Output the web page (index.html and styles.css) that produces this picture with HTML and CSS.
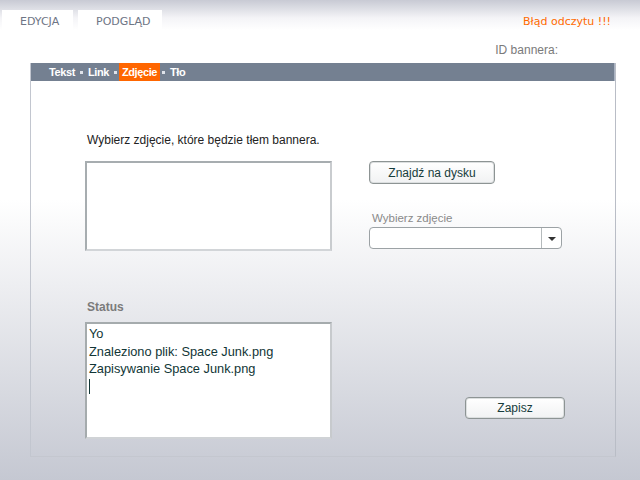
FILE: index.html
```html
<!DOCTYPE html>
<html lang="pl">
<head>
<meta charset="utf-8">
<link rel="stylesheet" href="styles.css">
</head>
<body>
<div class="page">
  <header class="top">
    <nav class="tabs">
      <div class="tab tab-edit">EDYCJA</div>
      <div class="tab tab-preview">PODGLĄD</div>
    </nav>
    <div class="error">Błąd odczytu !!!</div>
  </header>
  <div class="id-row">ID bannera:</div>
  <section class="panel">
    <div class="bar">
      <span class="crumb">Tekst</span><span class="dot"></span>
      <span class="crumb">Link</span><span class="dot"></span>
      <span class="crumb active">Zdjęcie</span><span class="dot"></span>
      <span class="crumb">Tło</span>
    </div>
    <div class="content">
      <p class="intro">Wybierz zdjęcie, które będzie tłem bannera.</p>
      <div class="row">
        <div class="preview-box"></div>
        <div class="side">
          <button class="btn btn-find">Znajdź na dysku</button>
          <label class="select-label">Wybierz zdjęcie</label>
          <div class="select">
            <div class="select-value"></div>
            <div class="select-arrow"><span class="tri"></span></div>
          </div>
        </div>
      </div>
      <div class="status-title">Status</div>
      <div class="row">
        <div class="status-box">
          <div>Yo</div>
          <div>Znaleziono plik: Space Junk.png</div>
          <div>Zapisywanie Space Junk.png</div>
          <div class="caret"></div>
        </div>
        <div class="side side-bottom">
          <button class="btn btn-save">Zapisz</button>
        </div>
      </div>
    </div>
  </section>
</div>
</body>
</html>
```

FILE: styles.css
```css
* { box-sizing: border-box; }
html, body { margin: 0; padding: 0; }
body {
  width: 640px;
  height: 480px;
  overflow: hidden;
  font-family: "Liberation Sans", Arial, sans-serif;
  background: linear-gradient(to bottom,
    #c8cad4 0px, #f4f4f7 18px, #ffffff 30px, #ffffff 200px, #c5c8d2 480px);
}
.page { width: 640px; height: 480px; }
.top {
  display: flex;
  justify-content: space-between;
  height: 43px;
}
.tabs {
  display: flex;
  gap: 5px;
  padding: 10px 0 0 2px;
}
.tab {
  background: #ffffff;
  height: 33px;
  font-family: "DejaVu Sans", sans-serif;
  font-size: 11px;
  color: #6e7585;
  padding: 5px 0 0 18px;
}
.tab-edit { width: 71px; }
.tab-preview { width: 84px; }
.error {
  color: #ff6a00;
  font-family: "DejaVu Sans", sans-serif;
  font-size: 11px;
  padding: 15px 29px 0 0;
}
.id-row {
  text-align: right;
  padding-right: 82px;
  font-size: 12px;
  color: #7a7a7a;
  height: 20px;
}
.panel {
  margin-left: 30px;
  width: 586px;
  height: 394px;
  border-left: 1px solid #c2c6cf;
  border-right: 1px solid #b9bdc6;
  border-bottom: 1px solid #c4c7cf;
}
.bar {
  height: 18px;
  background: #748091;
  border-right: 1px solid #aab3c2;
  display: flex;
  align-items: stretch;
  padding-left: 15px;
  font-size: 11px;
  color: #ffffff;
}
.crumb {
  display: flex;
  align-items: center;
  padding: 0 3px;
  font-weight: 600;
  letter-spacing: -0.4px;
}
.crumb.active { background: #ff6600; }
.dot {
  width: 3px;
  height: 3px;
  background: #dfe3ea;
  align-self: center;
  margin: 1px 2px 0 2px;
}
.content { padding: 52px 0 0 54px; }
.intro {
  margin: 0 0 14px 2px;
  font-size: 12px;
  color: #222;
}
.row { display: flex; }
.preview-box {
  width: 247px;
  height: 90px;
  background: #fff;
  border: 2px solid #a7adb0;
  border-right-color: #c9cccf;
  border-bottom-color: #d2d5d8;
}
.side {
  margin-left: 37px;
  display: flex;
  flex-direction: column;
  align-items: flex-start;
}
.btn {
  font-family: "Liberation Sans", Arial, sans-serif;
  font-size: 12px;
  color: #163c3c;
  background: linear-gradient(to bottom, #ffffff, #f1f2f3);
  border: 1px solid #8d9494;
  border-radius: 4px;
  box-shadow: inset 0 0 0 1px #dcdfe0;
  padding: 0;
}
.btn-find { width: 126px; height: 23px; }
.select-label {
  margin-top: 28px;
  font-size: 11.5px;
  color: #8a8a8a;
  padding-left: 3px;
}
.select {
  margin-top: 3px;
  width: 193px;
  height: 22px;
  display: flex;
  border: 1px solid #9ca2a5;
  border-radius: 4px;
  background: #fff;
}
.select-value { flex: 1; }
.select-arrow {
  width: 20px;
  border-left: 1px solid #b5babc;
  display: flex;
  align-items: center;
  justify-content: center;
}
.tri {
  width: 0;
  height: 0;
  border-left: 4px solid transparent;
  border-right: 4px solid transparent;
  border-top: 4px solid #333;
  margin-top: 1px;
}
.status-title {
  margin: 49px 0 8px 2px;
  font-size: 12px;
  font-weight: bold;
  color: #7b7b7b;
}
.status-box {
  width: 247px;
  height: 117px;
  background: #fff;
  border: 2px solid #a5abad;
  border-right-color: #c7cacd;
  border-bottom-color: #d0d3d6;
  padding: 1px 2px;
  font-size: 12.8px;
  line-height: 17.5px;
  color: #113636;
}
.caret {
  width: 1px;
  height: 15px;
  background: #113636;
  margin-top: 1px;
}
.side-bottom { justify-content: flex-start; padding-top: 75px; margin-left: 133px; }
.btn-save { width: 100px; height: 22px; }
```
